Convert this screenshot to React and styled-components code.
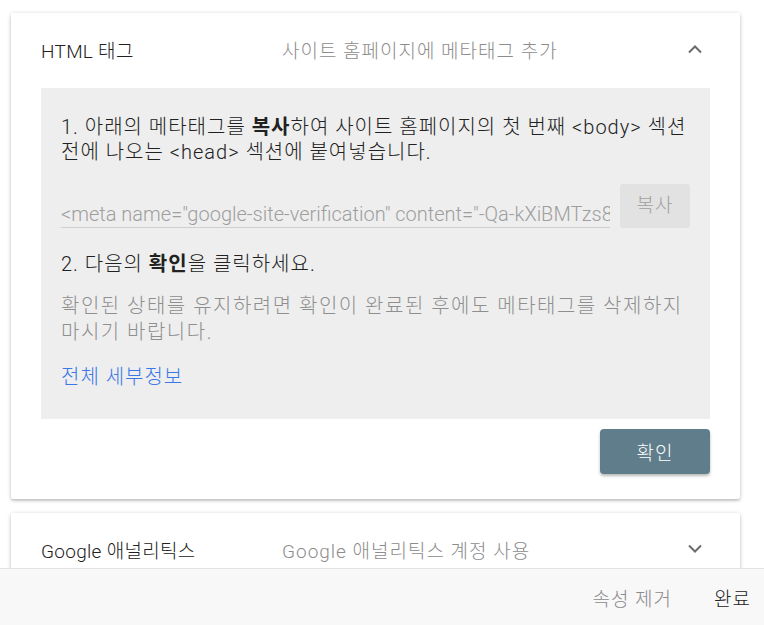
import React from 'react'
import styled, { createGlobalStyle } from 'styled-components'

const GlobalStyle = createGlobalStyle`
  html, body {
    margin: 0;
    padding: 0;
    background: #ffffff;
    font-family: Roboto, "Noto Sans CJK KR", sans-serif;
    font-weight: 300;
    color: #212121;
    word-break: keep-all;
  }
`

const Page = styled.div`
  height: 625px;
  display: flex;
  flex-direction: column;
  overflow: hidden;
`

const Scroll = styled.div`
  flex: 1;
  overflow: hidden;
  padding: 13px 24px 0 11px;
  display: flex;
  flex-direction: column;
  gap: 14px;
`

const Card = styled.div`
  background: #fff;
  border-radius: 2px;
  box-shadow: 0 1px 4px rgba(0, 0, 0, 0.22), 0 2px 2px rgba(0, 0, 0, 0.1);
  flex-shrink: 0;
`

const Header = styled.div`
  height: 72px;
  display: flex;
  align-items: center;
  padding: 0 30px;
`

const Title = styled.div`
  width: 241px;
  font-size: 19px;
  letter-spacing: 0.3px;
  color: #212121;
`

const Subtitle = styled.div`
  flex: 1;
  font-size: 19px;
  letter-spacing: 1px;
  color: #8c8c8c;
`

const Chevron = styled.svg`
  width: 16px;
  height: 10px;
  margin-right: 7px;
`

const Body = styled.div`
  padding: 3px 30px 25px;
`

const Panel = styled.div`
  background: #eeeeee;
  padding: 27px 20px 30px;
`

const Step = styled.p`
  margin: 0;
  font-size: 20px;
  line-height: 25px;
  letter-spacing: 1px;
  color: #212121;

  b {
    font-weight: 700;
  }
`

const CodeRow = styled.div`
  display: flex;
  align-items: flex-end;
  gap: 10px;
  margin: 19px 0 24px;
`

const CodeInput = styled.div`
  flex: 1;
  font-size: 20px;
  color: #9e9e9e;
  white-space: nowrap;
  overflow: hidden;
  border-bottom: 1px solid #cfcfcf;
  padding-bottom: 2px;
  line-height: 22px;
`

const CopyButton = styled.button`
  width: 70px;
  height: 44px;
  border: 0;
  border-radius: 3px;
  background: #e2e2e2;
  color: #a0a0a0;
  font-family: inherit;
  font-weight: 300;
  font-size: 19px;
  letter-spacing: 1px;
  padding: 0 0 6px;
`

const Note = styled.p`
  margin: 16px 0 0;
  font-size: 20px;
  line-height: 26px;
  letter-spacing: 1.5px;
  color: #8f8f8f;
`

const Link = styled.a`
  display: block;
  margin-top: 20px;
  font-size: 20px;
  line-height: 24px;
  letter-spacing: 1px;
  color: #3b78e7;
  text-decoration: none;
`

const Actions = styled.div`
  display: flex;
  justify-content: flex-end;
  margin-top: 10px;
`

const Confirm = styled.button`
  width: 110px;
  height: 45px;
  border: 0;
  border-radius: 4px;
  background: #607d8b;
  color: #fff;
  font-family: inherit;
  font-weight: 300;
  font-size: 19px;
  letter-spacing: 1px;
  box-shadow: 0 2px 3px rgba(0, 0, 0, 0.28);
`

const Footer = styled.div`
  height: 56px;
  flex-shrink: 0;
  background: #f8f8f8;
  border-top: 1px solid #e3e3e3;
  display: flex;
  align-items: center;
  justify-content: flex-end;
  gap: 42px;
  padding-right: 13px;
`

const FooterButton = styled.span`
  font-size: 19px;
  letter-spacing: 1px;
  color: ${({ primary }) => (primary ? '#212121' : '#8a8a8a')};
`

const Arrow = ({ up }) => (
  <Chevron viewBox="0 0 16 10">
    <polyline
      points={up ? '2,8.5 8,2.5 14,8.5' : '2,1.5 8,7.5 14,1.5'}
      fill="none"
      stroke="#6b6b6b"
      strokeWidth="2"
    />
  </Chevron>
)

export default function App() {
  return (
    <Page>
      <GlobalStyle />
      <Scroll>
        <Card>
          <Header>
            <Title>HTML 태그</Title>
            <Subtitle>사이트 홈페이지에 메타태그 추가</Subtitle>
            <Arrow up />
          </Header>
          <Body>
            <Panel>
              <Step>
                1. 아래의 메타태그를 <b>복사</b>하여 사이트 홈페이지의 첫 번째 &lt;body&gt; 섹션
                전에 나오는 &lt;head&gt; 섹션에 붙여넣습니다.
              </Step>
              <CodeRow>
                <CodeInput>
                  &lt;meta name="google-site-verification" content="-Qa-kXiBMTzs8vQ2nR" /&gt;
                </CodeInput>
                <CopyButton>복사</CopyButton>
              </CodeRow>
              <Step>
                2. 다음의 <b>확인</b>을 클릭하세요.
              </Step>
              <Note>
                확인된 상태를 유지하려면 확인이 완료된 후에도 메타태그를 삭제하지
                마시기 바랍니다.
              </Note>
              <Link href="#">전체 세부정보</Link>
            </Panel>
            <Actions>
              <Confirm>확인</Confirm>
            </Actions>
          </Body>
        </Card>
        <Card>
          <Header>
            <Title>Google 애널리틱스</Title>
            <Subtitle>Google 애널리틱스 계정 사용</Subtitle>
            <Arrow />
          </Header>
        </Card>
      </Scroll>
      <Footer>
        <FooterButton>속성 제거</FooterButton>
        <FooterButton primary>완료</FooterButton>
      </Footer>
    </Page>
  )
}
